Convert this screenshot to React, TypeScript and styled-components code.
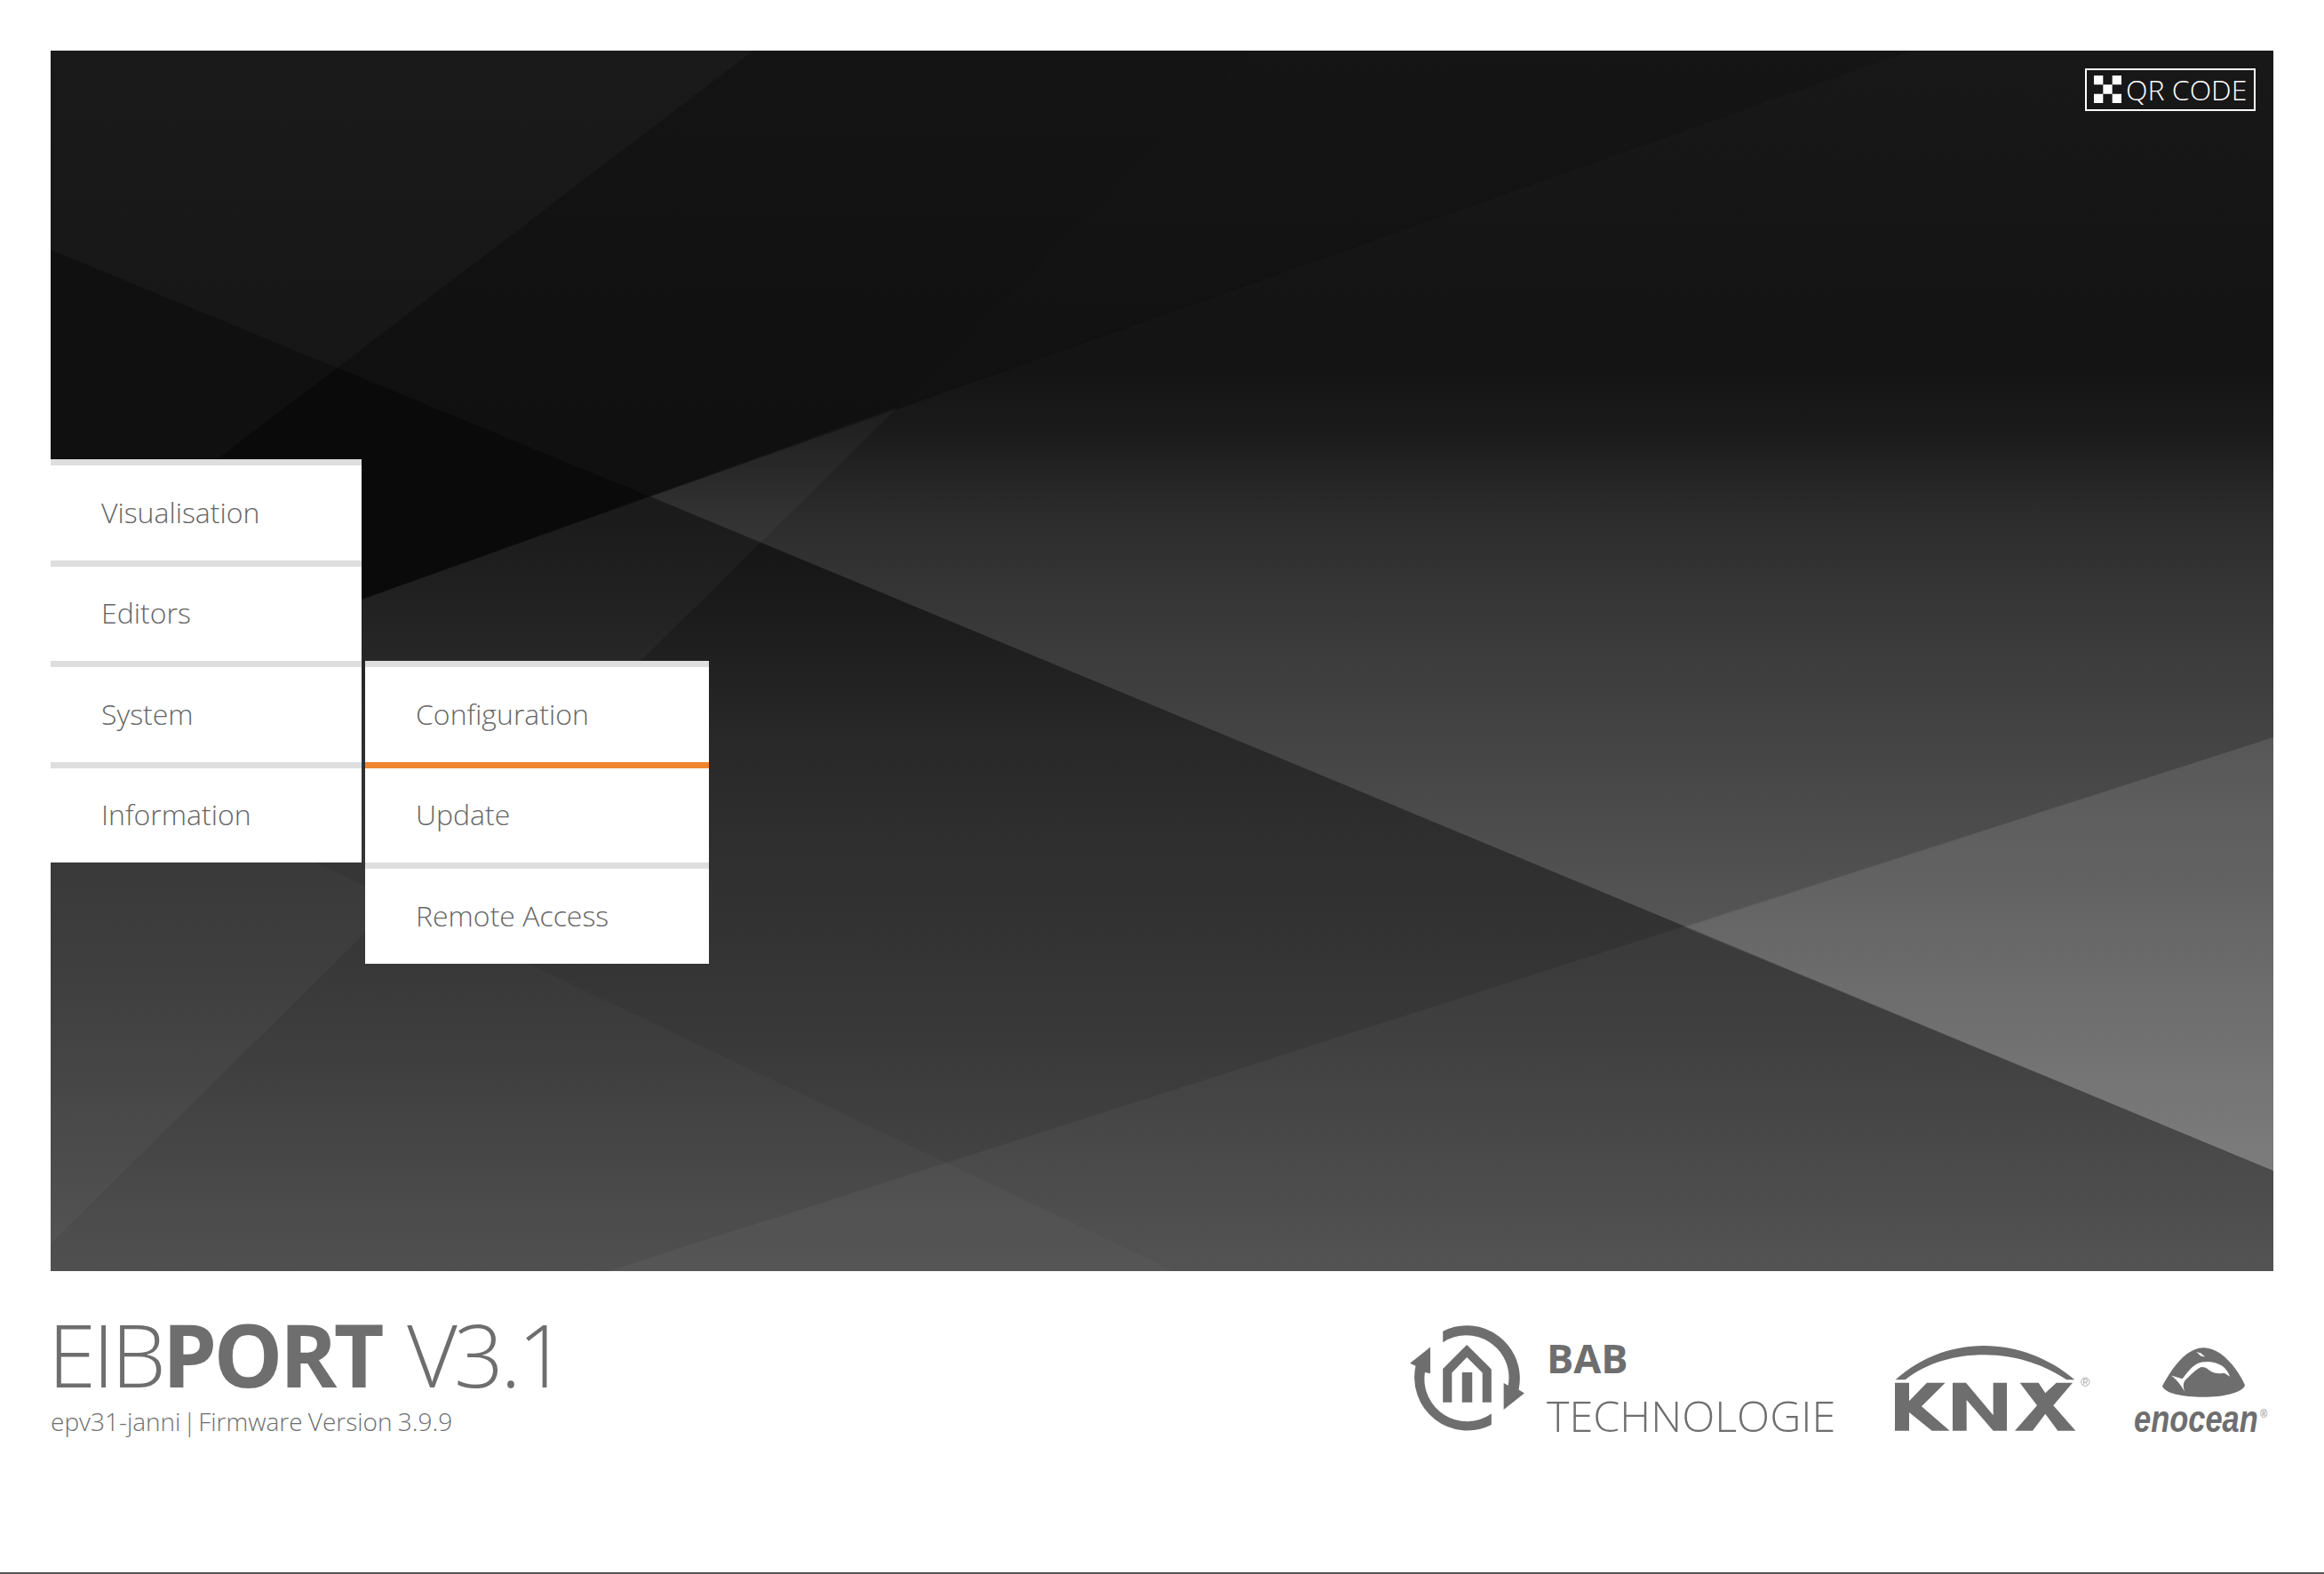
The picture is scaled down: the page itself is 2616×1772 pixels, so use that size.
import React from 'react';
import styled, { createGlobalStyle } from 'styled-components';

const GlobalStyle = createGlobalStyle`
  html, body {
    margin: 0;
    padding: 0;
    background: #fff;
  }
  body {
    font-family: "Open Sans", "Noto Sans", sans-serif;
    color: #6e6e6e;
  }
`;

const Page = styled.div`
  box-sizing: border-box;
  width: 2616px;
  height: 1772px;
  padding: 57px 57px 0;
  border-bottom: 2px solid #555;
  display: flex;
  flex-direction: column;
`;

const Hero = styled.main`
  position: relative;
  height: 1374px;
  padding-top: 460px;
  box-sizing: border-box;
  display: flex;
  align-items: flex-start;
  gap: 4px;
  overflow: hidden;
  background: #111;
`;

const HeroArt = styled.svg`
  position: absolute;
  inset: 0;
  width: 100%;
  height: 100%;
`;

const QrButton = styled.a`
  position: absolute;
  top: 20px;
  right: 20px;
  box-sizing: border-box;
  height: 48px;
  width: 192px;
  border: 2px solid #fff;
  display: flex;
  align-items: center;
  gap: 5px;
  padding-left: 8px;
  padding-bottom: 1px;
  color: #fff;
  font-size: 32px;
  font-weight: 300;
  white-space: nowrap;
`;

const QrGlyph = styled.svg`
  width: 31px;
  height: 31px;
  flex: none;
`;

const Menu = styled.nav<{ $top?: number; $width: number }>`
  position: relative;
  width: ${p => p.$width}px;
  margin-top: ${p => p.$top ?? 0}px;
  display: flex;
  flex-direction: column;
`;

const MenuItem = styled.a<{ $active?: boolean }>`
  box-sizing: border-box;
  height: 113.5px;
  padding-left: 57px;
  padding-bottom: 2px;
  background: #fff;
  border-top: 7px solid ${p => (p.$active ? '#f0852f' : '#dedede')};
  display: flex;
  align-items: center;
  font-size: 32px;
  font-weight: 300;
  color: #666;
`;

const Footer = styled.footer`
  display: flex;
  justify-content: space-between;
  align-items: flex-start;
`;

const Brand = styled.div`
  padding-top: 44px;
`;

const Title = styled.h1`
  margin: 0 0 0 -3px;
  font-size: 98px;
  line-height: 98px;
  font-weight: 300;
  letter-spacing: -3.8px;
  word-spacing: 8px;
  color: #6e6e6e;
  white-space: nowrap;
  b {
    font-weight: 700;
  }
`;

const Subtitle = styled.div`
  margin-top: 8px;
  font-size: 28px;
  word-spacing: -1px;
  font-weight: 300;
  color: #6e6e6e;
  white-space: nowrap;
`;

const Separator = styled.span`
  margin: 0 -4px;
`;

const Logos = styled.div`
  display: flex;
  align-items: flex-start;
  padding-top: 61px;
`;

const BabLogo = styled.div`
  display: flex;
  align-items: flex-start;
  gap: 25px;
  margin-right: 69px;
`;

const BabIcon = styled.svg`
  width: 129px;
  height: 119px;
  flex: none;
`;

const BabText = styled.div`
  width: 323px;
  padding-top: 5px;
  display: flex;
  flex-direction: column;
  font-size: 48.5px;
  line-height: 64px;
  color: #6e6e6e;
  font-weight: 300;
  white-space: nowrap;
  b {
    font-size: 45px;
    font-weight: 700;
  }
`;

const KnxIcon = styled.svg`
  width: 220px;
  height: 97px;
  flex: none;
  margin: 23px 49px 0 0;
`;

const EnoLogo = styled.div`
  width: 157px;
  padding-top: 25px;
  display: flex;
  flex-direction: column;
  align-items: center;
`;

const EnoIcon = styled.svg`
  width: 93px;
  height: 56px;
`;

const EnoText = styled.div`
  align-self: flex-start;
  margin-top: 3px;
  font-family: "Liberation Sans", sans-serif;
  font-size: 42px;
  line-height: 44px;
  font-weight: 700;
  font-style: italic;
  color: #6e6e6e;
  white-space: nowrap;
  transform: scaleX(0.82);
  transform-origin: left center;
  sup {
    margin-left: 3px;
    font-size: 13px;
    font-style: normal;
    font-weight: 400;
    color: #888;
    vertical-align: 16px;
    line-height: 0;
  }
`;

const mainItems = ['Visualisation', 'Editors', 'System', 'Information'];
const subItems = ['Configuration', 'Update', 'Remote Access'];

export default function App() {
  return (
    <>
      <GlobalStyle />
      <Page>
        <Hero>
          <HeroArt viewBox="0 0 2502 1374" preserveAspectRatio="none">
            <defs>
              <linearGradient id="lowerBase" gradientUnits="userSpaceOnUse" x1="0" y1="0" x2="0" y2="1374">
                <stop offset="0.38" stopColor="#141414" />
                <stop offset="0.44" stopColor="#191919" />
                <stop offset="0.5" stopColor="#202020" />
                <stop offset="0.56" stopColor="#282828" />
                <stop offset="0.64" stopColor="#2e2e2e" />
                <stop offset="0.73" stopColor="#333333" />
                <stop offset="0.82" stopColor="#3a3a3a" />
                <stop offset="1" stopColor="#4c4c4c" />
              </linearGradient>
              <linearGradient id="upperLight" gradientUnits="userSpaceOnUse" x1="0" y1="0" x2="0" y2="1374">
                <stop offset="0" stopColor="#181818" />
                <stop offset="0.18" stopColor="#151515" />
                <stop offset="0.26" stopColor="#141414" />
                <stop offset="0.31" stopColor="#1a1a1a" />
                <stop offset="0.38" stopColor="#2c2c2c" />
                <stop offset="0.48" stopColor="#3a3a3a" />
                <stop offset="0.72" stopColor="#565656" />
                <stop offset="0.9" stopColor="#6c6c6c" />
                <stop offset="1" stopColor="#767676" />
              </linearGradient>
              <linearGradient id="upperDark" gradientUnits="userSpaceOnUse" x1="0" y1="0" x2="0" y2="600">
                <stop offset="0" stopColor="#141414" />
                <stop offset="0.5" stopColor="#111111" />
                <stop offset="1" stopColor="#0f0f0f" />
              </linearGradient>
            </defs>
            <rect width="2502" height="1374" fill="url(#lowerBase)" />
            <polygon points="0,224 675,502 0,743" fill="#0a0a0a" />
            <polygon points="675,502 2094,0 2502,0 2502,1261" fill="url(#upperLight)" />
            <polygon points="0,224 675,502 2094,0 0,0" fill="url(#upperDark)" />
            <polygon points="0,0 791,0 0,603" fill="#fff" fillOpacity="0.027" />
            <polygon points="954,401 0,1343 0,743" fill="#fff" fillOpacity="0.03" />
            <polygon points="1350,0 954,401 2094,0" fill="#fff" fillOpacity="0.006" />
            <polygon points="0,772 1265,1374 0,1374" fill="#fff" fillOpacity="0.024" />
            <polygon points="2502,773 628,1374 2502,1374" fill="#fff" fillOpacity="0.04" />
            <polygon points="2502,773 1839,987 2502,1261" fill="#fff" fillOpacity="0.07" />
          </HeroArt>
          <QrButton>
            <QrGlyph viewBox="0 0 3 3">
              <path fill="#fff" d="M0 0h1v1H0zM2 0h1v1H2zM1 1h1v1H1zM0 2h1v1H0zM2 2h1v1H2z" />
            </QrGlyph>
            QR CODE
          </QrButton>
          <Menu $width={350}>
            {mainItems.map(label => (
              <MenuItem key={label}>{label}</MenuItem>
            ))}
          </Menu>
          <Menu $width={387} $top={227}>
            {subItems.map((label, i) => (
              <MenuItem key={label} $active={i === 1}>{label}</MenuItem>
            ))}
          </Menu>
        </Hero>
        <Footer>
          <Brand>
            <Title>EIB<b>PORT</b> V3.1</Title>
            <Subtitle>epv31-janni <Separator>|</Separator> Firmware Version 3.9.9</Subtitle>
          </Brand>
          <Logos>
            <BabLogo>
              <BabIcon viewBox="80 65 382 353">
                <path fill="#6e6e6e" d="M190 85 A177 177 0 0 1 443 280 L462 292 L393 347 L393 258 L408 266 A142 142 0 0 0 190 122 Z" />
                <path fill="#6e6e6e" d="M352 360 A142 142 0 0 1 130 222 L148 226 L148 138 L80 192 L99 201 A177 177 0 0 0 352 397 Z" />
                <path fill="#6e6e6e" d="M270 130 L352 212 V322 H322 V224 L270 172 L220 224 V322 H190 V210 Z M254 222 H288 V322 H254 Z" />
              </BabIcon>
              <BabText>
                <b>BAB</b>
                TECHNOLOGIE
              </BabText>
            </BabLogo>
            <KnxIcon viewBox="100 75 660 291">
              <path fill="#6e6e6e" d="M102 190 C190 110 300 75 400 75 C510 75 620 115 707 190 L680 190 C600 135 500 106 400 106 C310 106 210 130 135 190 Z" />
              <path fill="#6e6e6e" d="M100 200 H148 V262 L208 200 H270 L190 280 L285 362 H225 L148 300 V362 H100 Z" />
              <path fill="#6e6e6e" d="M295 200 H340 L432 310 V200 H478 V362 H432 L342 258 V362 H295 Z" />
              <path fill="#6e6e6e" d="M522 200 H585 L608 235 L645 200 H700 L635 277 L710 362 H650 L608 305 L565 362 H505 L580 277 Z" />
              <circle cx="743" cy="197" r="14" fill="none" stroke="#888" strokeWidth="2" />
              <path fill="none" stroke="#888" strokeWidth="2" d="M738 206 V188 H745 A4.5 4.5 0 0 1 745 198 H738 M744 198 L749 206" />
            </KnxIcon>
            <EnoLogo>
              <EnoIcon viewBox="82 38 280 167">
                <path fill="#6e6e6e" d="M82 168 C110 115 160 38 222 38 C285 38 340 115 362 165 C355 190 290 205 220 205 C150 205 90 192 82 168 Z" />
                <path fill="#fff" d="M112 132 L150 143 C165 125 178 104 200 92 C225 80 262 84 285 100 C298 110 306 122 311 136 L292 124 C278 128 250 124 236 110 C228 104 218 102 212 104 C194 112 176 132 158 150 C152 160 152 172 158 186 C146 168 134 148 112 132 Z" />
                <path fill="#fff" d="M198 52 L212 56 L227 69 L212 66 Z" />
              </EnoIcon>
              <EnoText>enocean<sup>®</sup></EnoText>
            </EnoLogo>
          </Logos>
        </Footer>
      </Page>
    </>
  );
}
